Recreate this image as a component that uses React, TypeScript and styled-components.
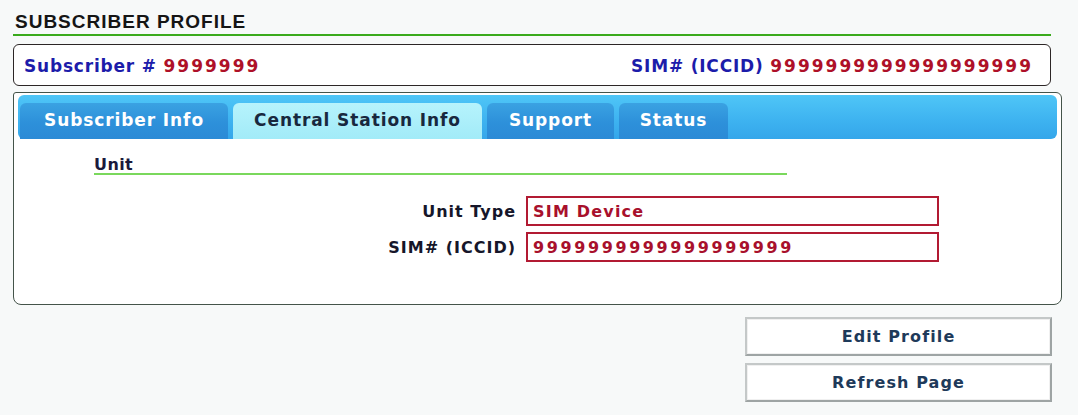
import styled, { createGlobalStyle } from 'styled-components';

const GlobalStyle = createGlobalStyle`
	body {
		margin: 0;
		background-color: #f7f9f9;
		font-family: 'DejaVu Sans', Verdana, sans-serif;
	}
`;

const StyledPage = styled.div`
	padding: 12px 16px 0 13px;
	width: 1049px;
`;

const StyledTitle = styled.h1`
	margin: 0;
	width: 1036px;
	padding: 0 0 2px 2px;
	font-family: 'Liberation Sans', Arial, sans-serif;
	font-size: 19px;
	line-height: 20px;
	letter-spacing: 1px;
	font-weight: bold;
	color: #151515;
	border-bottom: 2px solid #3aaa1c;
`;

const StyledInfoBox = styled.div`
	margin-top: 8px;
	width: 1038px;
	height: 42px;
	box-sizing: border-box;
	display: flex;
	align-items: center;
	justify-content: space-between;
	padding: 2px 17px 0 10px;
	border: 1.5px solid #2c2626;
	border-radius: 6px;
	background-color: #fff;
	font-size: 17px;
	font-weight: bold;
	letter-spacing: 0.8px;
`;

const StyledLabel = styled.span`
	color: #1c1caa;
`;

const StyledValue = styled.span`
	color: #ae1028;
	letter-spacing: 2px;
`;

const StyledPanel = styled.div`
	margin-top: 6px;
	height: 213px;
	box-sizing: border-box;
	padding: 2px 4px 0 4px;
	border: 1.5px solid #44544a;
	border-radius: 3px 6px 8px 8px;
	background-color: #fff;
`;

const StyledTabBar = styled.div`
	height: 44px;
	display: flex;
	align-items: flex-end;
	gap: 5px;
	padding-left: 2px;
	border-radius: 6px;
	background: linear-gradient(#4fc6f7, #3db2f0 60%, #34a6ea);
`;

const StyledTab = styled.div<{ $active?: boolean; $width: number }>`
	width: ${(p) => p.$width}px;
	height: 36px;
	box-sizing: border-box;
	display: flex;
	align-items: center;
	justify-content: center;
	padding-bottom: 2px;
	border-radius: 6px 6px 0 0;
	font-size: 17px;
	font-weight: bold;
	letter-spacing: 0.9px;
	color: ${(p) => (p.$active ? '#18283e' : '#ffffff')};
	background: ${(p) =>
		p.$active
			? 'linear-gradient(#b6f3fc, #a2ebf8)'
			: 'linear-gradient(#3aa2e2, #2d90da 55%, #2b8ad6)'};
`;

const StyledSection = styled.div`
	padding: 17px 0 0 76px;
`;

const StyledSectionTitle = styled.h3`
	margin: 0;
	width: 693px;
	font-size: 16px;
	line-height: 17px;
	font-weight: bold;
	letter-spacing: 0.4px;
	color: #1a1a3c;
	border-bottom: 2px solid #7ad85c;
`;

const StyledForm = styled.div`
	margin-top: 21px;
	display: grid;
	grid-template-columns: 498px 413px;
	grid-auto-rows: 30px;
	column-gap: 10px;
	row-gap: 6px;
`;

const StyledFieldLabel = styled.label`
	display: flex;
	align-items: center;
	justify-content: flex-end;
	font-size: 16px;
	font-weight: bold;
	letter-spacing: 1px;
	color: #16162a;
`;

const StyledField = styled.div<{ $digits?: boolean }>`
	box-sizing: border-box;
	display: flex;
	align-items: center;
	padding-left: 5px;
	border: 2px solid #b21a32;
	background-color: #fff;
	font-size: 16px;
	font-weight: bold;
	letter-spacing: ${(p) => (p.$digits ? '2.6px' : '1.2px')};
	color: #a8102c;
`;

const StyledActions = styled.div`
	margin: 12px 10px 0 0;
	display: flex;
	flex-direction: column;
	align-items: flex-end;
	gap: 7px;
`;

const StyledButton = styled.button`
	width: 307px;
	height: 39px;
	border: 2px solid #c4c8c8;
	border-right-color: #9ea4a4;
	border-bottom-color: #9ea4a4;
	box-shadow: inset 0 0 0 1px #f0f0f0;
	background-color: #fff;
	font-family: 'DejaVu Sans', Verdana, sans-serif;
	font-size: 16px;
	font-weight: bold;
	letter-spacing: 1.1px;
	color: #1e3a5a;
	cursor: pointer;
`;

const tabs = [
	{ label: 'Subscriber Info', width: 208 },
	{ label: 'Central Station Info', width: 249, active: true },
	{ label: 'Support', width: 127 },
	{ label: 'Status', width: 109 },
];

const App = () => {
	return (
		<>
			<GlobalStyle />
			<StyledPage>
				<StyledTitle>SUBSCRIBER PROFILE</StyledTitle>
				<StyledInfoBox>
					<span>
						<StyledLabel>Subscriber # </StyledLabel>
						<StyledValue>9999999</StyledValue>
					</span>
					<span>
						<StyledLabel>SIM# (ICCID) </StyledLabel>
						<StyledValue>9999999999999999999</StyledValue>
					</span>
				</StyledInfoBox>
				<StyledPanel>
					<StyledTabBar>
						{tabs.map((tab) => (
							<StyledTab key={tab.label} $width={tab.width} $active={tab.active}>
								{tab.label}
							</StyledTab>
						))}
					</StyledTabBar>
					<StyledSection>
						<StyledSectionTitle>Unit</StyledSectionTitle>
					</StyledSection>
					<StyledForm>
						<StyledFieldLabel>Unit Type</StyledFieldLabel>
						<StyledField>SIM Device</StyledField>
						<StyledFieldLabel>SIM# (ICCID)</StyledFieldLabel>
						<StyledField $digits>9999999999999999999</StyledField>
					</StyledForm>
				</StyledPanel>
				<StyledActions>
					<StyledButton>Edit Profile</StyledButton>
					<StyledButton>Refresh Page</StyledButton>
				</StyledActions>
			</StyledPage>
		</>
	);
};

export default App;
